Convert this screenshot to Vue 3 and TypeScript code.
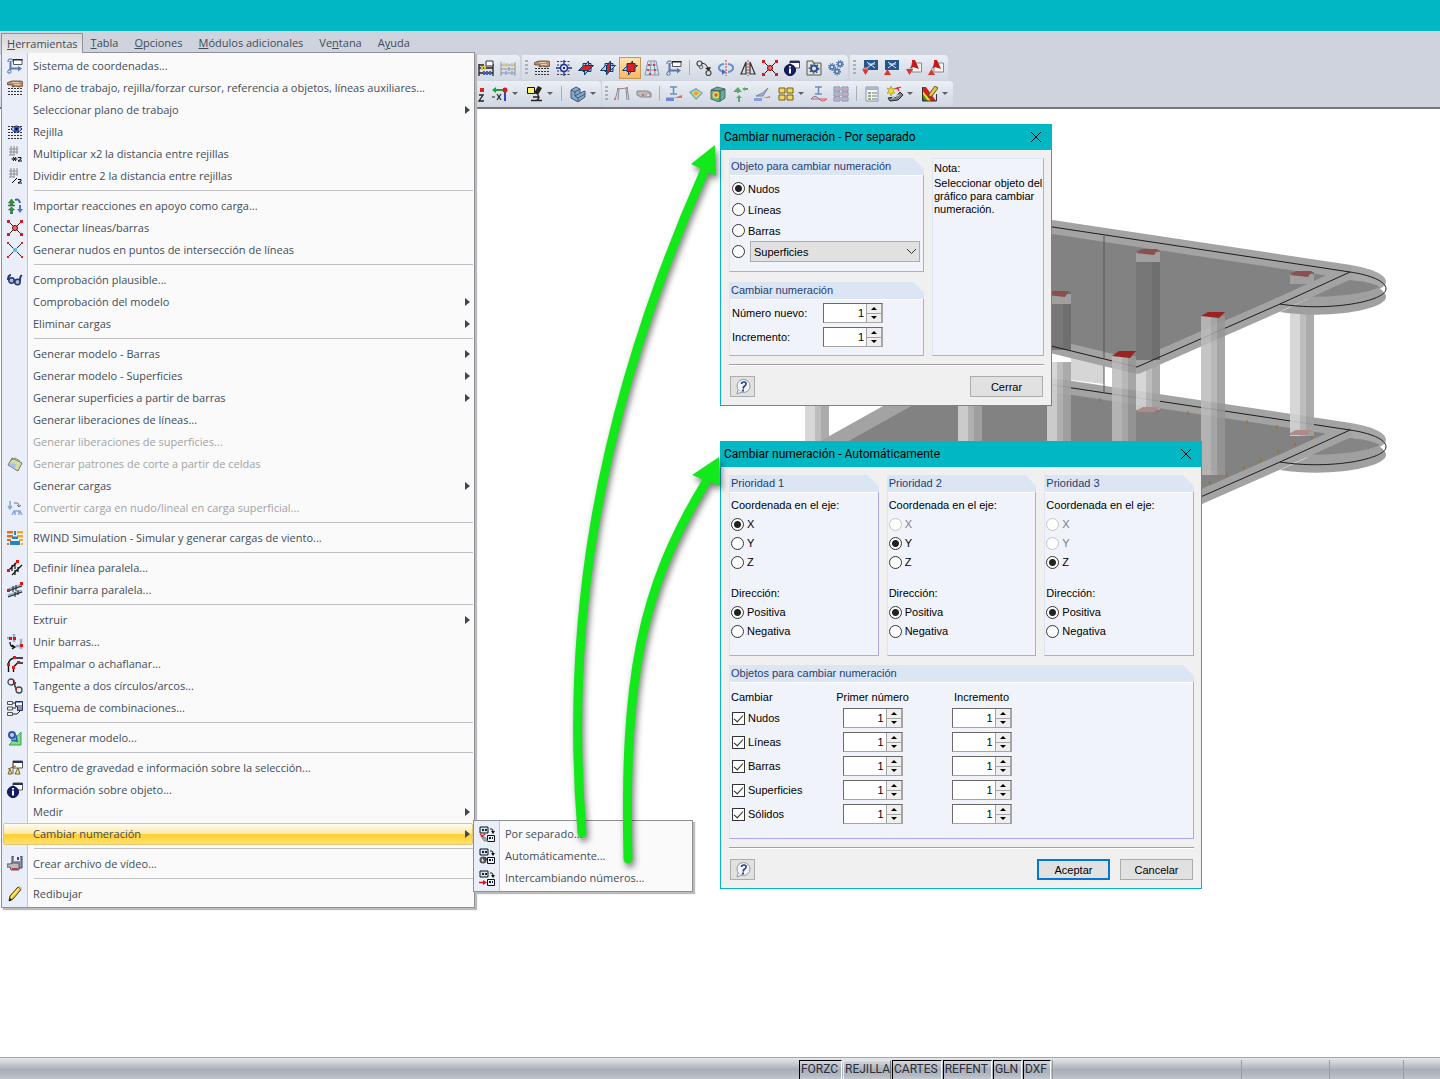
<script setup lang="ts">
import { ref } from 'vue'

interface MenuItem {
  label: string
  icon?: string
  sub?: boolean
  off?: boolean
  line?: boolean
  active?: boolean
}

const dots = '<path d="M1 8.500h14M1 11.500h14M1 14.500h14" stroke="#333" stroke-dasharray="2 1"/>'
const win = '<path d="M6 1h9.500v7H6z" fill="#fff" stroke="#555"/><path d="M6 1h9.500v2H6z" fill="#2b2b66"/>'
const flat = (c: string) => `<path d="M.500 10.500l5-5h10l-5 5z" fill="${c}" stroke="#123a66"/>`
const front = (c: string) => `<path d="M5 3.500h8v8H5z" fill="${c}" stroke="#123a66"/>`
const side = (c: string) => `<path d="M6.500 6l4-5v9l-4 5z" fill="${c}" stroke="#123a66"/>`
const sky = '#a9cdf0'
const red = '#e21f1f'
const renum = '<path d="M1 1h8v6H1z" fill="#cfe6fa" stroke="#111"/><path d="M3 3h2v2H3zM6 3h2v2H6zM10 11h2v2h-2zM13 11h1v2h-1z" fill="#123"/><path d="M8.500 9.500h7v6h-7z" fill="none" stroke="#111"/><path d="M11 3h2q1 0 1 3" fill="none" stroke="#111"/><path d="M12 5h4l-2 3z" fill="#111"/>'

const icons: Record<string, string> = {
  coord: '<path d="M3.500 3v8M3.500 10.500H12M3.500 10.500L1 15" fill="none" stroke="#5a78ab" stroke-width="2"/><path d="M1 4q0-3 2.500-3T6 4" fill="none" stroke="#7f97bf" stroke-width="1.500"/><path d="M11 8l4 2.500-4 3z" fill="#5a78ab"/><circle cx="2.500" cy="13.500" r="1.700" fill="#d5e2f5" stroke="#5a78ab"/><path d="M6.500 1.500h8.500v5H6.500z" fill="#fff" stroke="#555"/><path d="M6 1h9.500v1.500H6z" fill="#222"/>',
  hand: dots + '<path d="M0 3l2-1 3-1 9 0 2 1v4l-4 1-3-1-4 1 1-2-5 0-1-1z" fill="#b98d67" stroke="#4a3120" stroke-width=".7"/><path d="M5 2.500h7M7 4.500h6" stroke="#f1d5b9" stroke-width=".9"/>',
  grid: '<path d="M1 2.500h14M1 5.500h14" stroke="#333" stroke-dasharray="2 1"/>' + dots + '<path d="M4 5q5-6 11 0-5 6-11 0z" fill="#dbe8ff" stroke="#222"/><circle cx="9.500" cy="5" r="2.800" fill="#2558c9"/><circle cx="9.500" cy="5" r="1.200" fill="#001"/>',
  mul: '<path d="M2 3h9M2 6h9M2 9h6M4 0v9M7 0v9M10 0v8" stroke="#8d8d8d"/><path d="M4.500 13h6M6 11l3 4M9 11l-3 4" stroke="#000"/><path d="M11 11.500h3v1.500l-3 2h4" fill="none" stroke="#000"/>',
  div: '<path d="M2 3h9M2 6h9M2 9h6M4 0v9M7 0v9M10 0v8" stroke="#8d8d8d"/><path d="M5 15l5-5" stroke="#000"/><path d="M11 11.500h3v1.500l-3 2h4" fill="none" stroke="#000"/>',
  import: '<path d="M4.500 1l3 4h-2v2h2v1h-6V7h2V5h-2zM4.500 9l3 3h-2v4h-2v-4h-2z" fill="#279c3c" stroke="#145823" stroke-width=".6"/><path d="M8 2q4-2 5 3" fill="none" stroke="#3d65b5" stroke-width="2"/><path d="M12 7h2v4h2l-3 4-3-4h2z" fill="#4c78c8"/>',
  connect: '<path d="M2 2l12 12M14 2L2 14" stroke="#222"/><circle cx="8" cy="8" r="2.500" fill="#f66" stroke="#700"/><path d="M0 0h3v3H0zM13 0h3v3h-3zM0 13h3v3H0zM13 13h3v3h-3z" fill="#d81a1a"/>',
  inter: '<path d="M1 1l14 14M15 1L1 15" stroke="#222"/><path d="M6 6h4v4H6z" fill="#62b9f0"/><path d="M0 0h2v2H0zM14 0h2v2h-2zM0 14h2v2H0zM14 14h2v2h-2z" fill="#f01818"/>',
  glasses: '<path d="M4 3Q1 3 1 8M15 4q-2-1-2 5" fill="none" stroke="#26366f" stroke-width="2"/><circle cx="4.500" cy="8.500" r="2.700" fill="#a8b8e0" stroke="#26366f" stroke-width="1.500"/><circle cx="10.500" cy="10" r="2.700" fill="#a8b8e0" stroke="#26366f" stroke-width="1.500"/>',
  pattern: '<path d="M5 2l10 5-4 8L1 9z" fill="#d5dea0" stroke="#777"/><path d="M3 7l6 1-1 5-6-4z" fill="#a8c0f0"/><path d="M3 5l5-3 5 3" fill="none" stroke="#888"/>',
  convert: '<path d="M3 1v7M1 6l2 3 2-3" fill="none" stroke="#8ba5e0" stroke-width="1.500"/><path d="M7 3h3q2 0 2 3M10 5l2 2 2-2" fill="none" stroke="#777"/><path d="M5 15l2-4h6l2 4M8 11v4M12 11v4" fill="none" stroke="#8ba5e0" stroke-width="1.500"/>',
  rwind: '<path d="M0 1h6v2.500H0zM0 5h6v2.500H0zM0 9h4v2H0zM0 13h2v2H0z" fill="#ef6a10"/><path d="M10 1h6v2.500h-6zM10 5h6v2.500h-6zM12 9h4v2h-4zM14 13h2v2h-2z" fill="#f2ae0d"/><path d="M7 1h2v4H7zM5 6.500h6V9H5zM3 11h10v4H3z" fill="#2384bf"/>',
  parl: '<path d="M1 11L11 1M5 15L15 5M5 5v6M8 3v6M8 10v5M11 7v5" stroke="#111" stroke-width="1.200"/><path d="M0 9h3v3H0zM9 0h3v3H9z" fill="#e31313"/>',
  parb: '<path d="M1 8l14-5M1 14l14-5" stroke="#8fb0cf" stroke-width="3"/><path d="M1 9l14-5M1 15l14-5M6 4v6M9 3v6M8 10v5M11 8v5" stroke="#222"/><path d="M0 7h3v3H0zM13 0h3v3h-3z" fill="#e31313"/>',
  join: '<path d="M0 4h5M7 0v8M14 5v10M9 12h6" stroke="#8fb0cf" stroke-width="2.500"/><path d="M3 8q0 5 4 5M5 11l3 2-3 2" fill="none" stroke="#111" stroke-width="1.300"/><path d="M2 3h3v3H2zM6 3h3v3H6zM13 10h3v3h-3z" fill="#e31313"/>',
  fillet: '<path d="M1.500 16V9q0-7 7-7H16M6.500 16v-5l4-4H16" fill="none" stroke="#111" stroke-width="1.400"/><path d="M0 7h3v3H0zM6 0h3v3H6zM5 10h3v3H5zM10 5h3v3h-3z" fill="#d81a1a"/>',
  tangent: '<circle cx="4" cy="4" r="3" fill="none" stroke="#444" stroke-width="1.300"/><circle cx="12" cy="12" r="3" fill="none" stroke="#444" stroke-width="1.300"/><path d="M6.500 2.500l2.500 9" stroke="#222" stroke-width="1.300"/><path d="M7 4h2v2H7zM8 9h2v2H8z" fill="#d81a1a"/>',
  copy: '<circle cx="3.500" cy="3.500" r="2.500" fill="none" stroke="#444" stroke-width="1.200"/><circle cx="12.500" cy="13" r="2.500" fill="none" stroke="#444" stroke-width="1.200"/><circle cx="5" cy="7" r="1.800" fill="none" stroke="#666"/><path d="M6 3q4 0 6 5" fill="none" stroke="#222"/><path d="M9 8l6-1-2 4z" fill="#222"/>',
  scheme: '<path d="M.500 1.500h5v3h-5zM.500 7h5v3h-5zM.500 12.500h5v3h-5z" fill="#eee" stroke="#555"/><path d="M6 3h3M6 8h3M6 14h4l3-3" stroke="#222" fill="none"/><path d="M8.500 1.500h7v9h-5v-4h-2z" fill="#7d94d8" stroke="#333"/><path d="M9 3h6v2H9z" fill="#fff"/>',
  regen: '<path d="M14 2v13H2z" fill="#7edc86" stroke="#3fa34a"/><circle cx="5" cy="5" r="3" fill="#c3d4f2" stroke="#2d57ad" stroke-width="2"/><path d="M9 5l1 6-6-1" fill="none" stroke="#2d57ad" stroke-width="1.500"/>',
  balance: win + '<path d="M6 4v10M1 9l8-3M1 14h4l-2-5zM8 14h5l-2-6z" fill="#eedc9a" stroke="#7b6528"/>',
  info: win + '<circle cx="6" cy="10" r="5.500" fill="#141d6b" stroke="#080d3a"/><path d="M5 6h2v1.500H5zM5 8.500h2v5H5z" fill="#fff"/>',
  video: '<path d="M5 0h10v12H5z" fill="#8892c8" stroke="#444"/><path d="M7 0h6v5H7z" fill="#eef"/><path d="M10 1h2v3h-2z" fill="#446"/><path d="M0 8h3l2-1h7v7H4l-1-3H0z" fill="#bbb" stroke="#555"/><path d="M5 12h6v2H5z" fill="#c34"/>',
  pencil: '<path d="M3 10L11 1l3 2.500L6 13l-4 2z" fill="#f6d32d" stroke="#333"/><path d="M4.500 11l7-8.500" stroke="#fff3a0"/><path d="M11 1l1.500-1 2.500 2-1 1.500z" fill="#e9a0a0"/><path d="M2 15l1-3 2 2z" fill="#111"/>',
  sep1: renum + '<path d="M1 8l5 5M6 8l-4 3" stroke="#c22" stroke-width="1.300"/><path d="M3 12l3-1 3 4H5z" fill="#aaa" stroke="#666" stroke-width=".6"/>',
  auto: renum + '<circle cx="4" cy="12" r="2.500" fill="none" stroke="#555" stroke-width="2"/><circle cx="6" cy="11" r="1.500" fill="none" stroke="#333"/>',
  swap: renum + '<path d="M0 12.500h5" stroke="#d11" stroke-width="1.500"/><path d="M4 10l4 2.500L4 15z" fill="#d11"/>',
  abacus: '<path d="M1 16V4M15 16V4M1 8h14M1 13h14M1 5h5" stroke="#222" stroke-width="1.300"/><path d="M3 6h2v4H3zM6 6h2v4H6z" fill="#e4be2d"/><path d="M5 11h2v4H5zM8 11h2v4H8zM11 11h2v4h-2z" fill="#3f62b5"/><path d="M8 1h7v5H8z" fill="#fff" stroke="#333"/>',
  abacus2: '<g opacity=".5"><path d="M1 16V2M15 16V2M1 5h14M1 9h14M1 13h14" stroke="#444"/><path d="M3 3h2v4H3zM6 3h2v4H6zM11 3h2v4h-2z" fill="#d4b43d"/><path d="M5 11h2v4H5zM8 7h2v4H8zM11 11h2v4h-2z" fill="#5e7dc5"/></g>',
  snap: '<path d="M1 1.500h14M1 5h14M1 11h14M1 14.500h14" stroke="#333" stroke-dasharray="2 1.500"/><path d="M8 0v16M0 8h16" stroke="#1d2f9a" stroke-width="1.300"/><circle cx="8" cy="8" r="3.500" fill="#dce4f5" stroke="#1d2f9a" stroke-width="1.500"/><path d="M7 7h2v2H7z" fill="#1d2f9a"/>',
  plane1: front(sky) + side(sky) + flat(red),
  plane2: front(sky) + flat(sky) + side(red),
  plane3: flat(sky) + side(sky) + front(red),
  mesh: '<path d="M4 1h8l3 14H1zM3 5h10M2 10h12M7 1L6 15M10 1l1 14" fill="none" stroke="#7f98b5"/><path d="M4 4h2v2H4zM9 4h2v2H9zM3 9h2v2H3zM10 9h2v2h-2zM5 13h2v2H5z" fill="#d84040"/>',
  rotate: '<path d="M8 0v16" stroke="#c33" stroke-dasharray="2 1"/><path d="M6 4Q0 5 1 9q2 3 6 3M10 4q6 1 5 5-2 3-5 3" fill="none" stroke="#6a8fcb" stroke-width="2"/><path d="M4 9l4 3-4 3z" fill="#4a70b0"/>',
  mirror: '<path d="M6 2v12H1zM10 2v12h5z" fill="none" stroke="#333" stroke-width="1.200"/><path d="M8 0v16" stroke="#c33" stroke-dasharray="2 1"/>',
  gear: '<path d="M1 1h6v2h8v12H1z" fill="#eee4d2" stroke="#555"/><circle cx="8" cy="8.500" r="3" fill="none" stroke="#23509a" stroke-width="2"/><circle cx="8" cy="8.500" r="4.700" fill="none" stroke="#23509a" stroke-width="1.300" stroke-dasharray="1.500 2"/>',
  gears: '<g fill="none" stroke="#426cb0" stroke-width="1.500"><circle cx="4" cy="7" r="2"/><circle cx="9" cy="11.500" r="2"/><circle cx="12" cy="4" r="2"/></g><g fill="none" stroke="#426cb0" stroke-width="1.300" stroke-dasharray="1 1.200"><circle cx="4" cy="7" r="3.300"/><circle cx="9" cy="11.500" r="3.300"/><circle cx="12" cy="4" r="3.300"/></g>',
  sc1: '<path d="M2 0h14v10H2z" fill="#24578e"/><path d="M5 2l8 6M13 2L5 8M6 4h7" stroke="#dbe9f7"/><path d="M0 9h7l-3.500 6z" fill="#dd3333"/><path d="M1 7.500h5v2H1z" fill="#f08080"/>',
  sc2: '<path d="M1 0h14v10H1z" fill="#24578e"/><path d="M4 2l8 6M12 2L4 8M5 4h7" stroke="#dbe9f7"/><path d="M0 15h7L3.500 9z" fill="#dd3333"/>',
  pdf1: '<path d="M6 3h9.500v9H6z" fill="#f3f3f3" stroke="#888"/><path d="M6 0h3l4 9-6-2-4 2q4-3 3-9z" fill="#c81717"/><path d="M0 9h7l-3.500 6z" fill="#dd3333"/>',
  pdf2: '<path d="M6 3h9.500v9H6z" fill="#f3f3f3" stroke="#888"/><path d="M6 0h3l4 9-6-2-4 2q4-3 3-9z" fill="#c81717"/><path d="M0 15h7L3.500 9z" fill="#dd3333"/>',
  zax: '<path d="M12 2h4v4h-4z" fill="#d22"/><path d="M11 9h4l-4 6h5" fill="none" stroke="#222" stroke-width="1.300"/>',
  xax: '<path d="M0 4l4-3v2h7v2H4v2z" fill="#1ba332"/><path d="M13 4v11" stroke="#2947b8" stroke-width="2"/><circle cx="13" cy="4" r="2.500" fill="#d31c1c"/><path d="M0 11h3M5 8l4 6M9 8l-4 6" stroke="#222" stroke-width="1.200"/>',
  micro: '<path d="M.500 1.500h7v6h-7z" fill="#fdf56a" stroke="#111"/><path d="M11 0l4 2-4 7-4-2z" fill="#222"/><path d="M11 9q2 3-1 5M4 14.500h11M6 11h6" fill="none" stroke="#222" stroke-width="1.500"/>',
  solid: '<path d="M1 4l5-3 4 2v4l5-2v6l-7 5-7-4z" fill="#87a8c9" stroke="#3e5b7c"/><path d="M1 4l4 2v4l3 2M5 6l5-3M8 12l7-4M8 12v4M5 10l5-3" fill="none" stroke="#3e5b7c"/>',
  frame: '<path d="M1 14L4 3l9-1 2 12M5 3l-1 11M12 3l1 11" fill="none" stroke="#889"/><path d="M3 2h2v2H3zM12 1h2v2h-2zM0 12h2v2H0z" fill="#d77"/>',
  tube: '<path d="M1 5h11l3 2v4H5l-4-2z" fill="#bbb" stroke="#888"/><circle cx="12" cy="9" r="2" fill="#ddd" stroke="#999"/><path d="M6 8h2v2H6z" fill="#d66"/>',
  beam: '<path d="M4 1h7M7.500 1v7M4 8h7" stroke="#6c8fb9" stroke-width="1.500"/><path d="M0 11.500h8V15H0z" fill="#6d88d8"/><path d="M8 12l8-3v3z" fill="#e06c6c"/>',
  surf: '<path d="M1 6l7-4 7 5-7 7z" fill="#7c8fe0"/><path d="M2 6l6-3 6 4-6 6z" fill="#55c8c8"/><path d="M3.500 6.500L8 4l5 3-5 5z" fill="#f0e04a"/><path d="M5 7l3-2 3 2-3 3z" fill="#ee9a4a"/>',
  cube: '<path d="M1 4l6-3 8 2v9l-6 4-8-3z" fill="#5fae95" stroke="#556b7c"/><circle cx="6" cy="9" r="3.500" fill="#e6d83e"/><circle cx="6" cy="9" r="1.700" fill="#e05252"/><path d="M10 5v10M1 4l9 1 5-2" fill="none" stroke="#456"/>',
  react: '<path d="M6 1l4 5H7v1H5V6H1zM10 3l3-2v1h3v2h-3v1zM7 9l3 3H8v4H6v-4H4z" fill="#5ca96e"/>',
  slope: '<path d="M2 10Q9 8 14 2l-5 8z" fill="#a9b8cf" stroke="#74869f"/><path d="M0 12h8v3H0z" fill="#8aa0da"/><path d="M8 12l8-2v2z" fill="#e08080"/>',
  blocks: '<path d="M1 2h6v5H1zM9 2h6v5H9zM1 9h6v5H1zM9 9h6v5H9z" fill="#f3d75c" stroke="#6e5e18"/>',
  wave: '<path d="M4 1h7M7.500 1v7M4 8h7" stroke="#6c8fb9" stroke-width="1.500"/><path d="M0 13q4-5 8 0" fill="none" stroke="#6078cc"/><path d="M8 13q4 4 8 0M0 13h16" fill="none" stroke="#d55"/>',
  tables: '<path d="M1 1h6v4H1zM9 1h6v4H9zM1 6h6v4H1zM9 6h6v4H9zM1 11h6v4H1zM9 11h6v4H9z" fill="#cfd8ea" stroke="#7f8cab"/><path d="M2 3h4M10 3h4M2 8h4M10 8h4M2 13h4M10 13h4" stroke="#c77"/>',
  list: '<path d="M3 1h12v14H3z" fill="#f1f3f7" stroke="#8a94a6"/><path d="M3 1h12v3H3z" fill="#a9b5c9"/><path d="M5 6h3v2H5zM5 9h3v2H5zM5 12h3v2H5z" fill="#8fb07a"/><path d="M9 7h5M9 10h5M9 13h5" stroke="#777"/>',
  wand: '<path d="M4 0l1 3 3-1-2 3 2 2-3 0-1 3-1-3-3 0 2-2-2-3 3 1z" fill="#f3d92c" stroke="#8a7a10" stroke-width=".5"/><path d="M8 3l6-2M10 1l2 4" stroke="#d22" stroke-width="1.300"/><path d="M1 12l8-1 4-5 3 3-5 5-8 1z" fill="#7d8a94" stroke="#222"/><path d="M5 12l7-3" stroke="#dfe6ec"/>',
  colors: '<path d="M0 1h4l10 14H0z" fill="#d81d1d"/><path d="M0 4l9 11H0z" fill="#f2e01c"/><path d="M0 7l6 8H0z" fill="#2e9a34"/><path d="M0 11l3 4H0z" fill="#2340c0"/><path d="M.500 1v14h14V8" fill="none" stroke="#333"/><path d="M7 8l6-8 3 2-6 8-3 1z" fill="#f0c03a" stroke="#553"/>',
  help: '<circle cx="8.500" cy="7" r="6.500" fill="#f4f6fa" stroke="#8f98a5"/><path d="M3 11l-1 4 5-2" fill="#f4f6fa" stroke="#8f98a5"/><path d="M6.500 5q0-2 2.500-2t2 2Q11 6.500 9 7.500L8 9.500" fill="none" stroke="#28428c" stroke-width="1.700"/><path d="M7 10.500h2v2H7z" fill="#28428c"/>',
}

const tabs: [string, string, string][] = [
  ['', 'H', 'erramientas'],
  ['', 'T', 'abla'],
  ['', 'O', 'pciones'],
  ['', 'M', 'ódulos adicionales'],
  ['Ve', 'n', 'tana'],
  ['A', 'y', 'uda'],
]

const menu: MenuItem[] = [
  { label: 'Sistema de coordenadas...', icon: 'coord' },
  { label: 'Plano de trabajo, rejilla/forzar cursor, referencia a objetos, líneas auxiliares...', icon: 'hand' },
  { label: 'Seleccionar plano de trabajo', sub: true },
  { label: 'Rejilla', icon: 'grid' },
  { label: 'Multiplicar x2 la distancia entre rejillas', icon: 'mul' },
  { label: 'Dividir entre 2 la distancia entre rejillas', icon: 'div' },
  { label: 'Importar reacciones en apoyo como carga...', icon: 'import', line: true },
  { label: 'Conectar líneas/barras', icon: 'connect' },
  { label: 'Generar nudos en puntos de intersección de líneas', icon: 'inter' },
  { label: 'Comprobación plausible...', icon: 'glasses', line: true },
  { label: 'Comprobación del modelo', sub: true },
  { label: 'Eliminar cargas', sub: true },
  { label: 'Generar modelo - Barras', sub: true, line: true },
  { label: 'Generar modelo - Superficies', sub: true },
  { label: 'Generar superficies a partir de barras', sub: true },
  { label: 'Generar liberaciones de líneas...' },
  { label: 'Generar liberaciones de superficies...', off: true },
  { label: 'Generar patrones de corte a partir de celdas', icon: 'pattern', off: true },
  { label: 'Generar cargas', sub: true },
  { label: 'Convertir carga en nudo/lineal en carga superficial...', icon: 'convert', off: true },
  { label: 'RWIND Simulation - Simular y generar cargas de viento...', icon: 'rwind', line: true },
  { label: 'Definir línea paralela...', icon: 'parl', line: true },
  { label: 'Definir barra paralela...', icon: 'parb' },
  { label: 'Extruir', sub: true, line: true },
  { label: 'Unir barras...', icon: 'join' },
  { label: 'Empalmar o achaflanar...', icon: 'fillet' },
  { label: 'Tangente a dos círculos/arcos...', icon: 'tangent' },
  { label: 'Esquema de combinaciones...', icon: 'scheme' },
  { label: 'Regenerar modelo...', icon: 'regen', line: true },
  { label: 'Centro de gravedad e información sobre la selección...', icon: 'balance', line: true },
  { label: 'Información sobre objeto...', icon: 'info' },
  { label: 'Medir', sub: true },
  { label: 'Cambiar numeración', sub: true, active: true },
  { label: 'Crear archivo de vídeo...', icon: 'video', line: true },
  { label: 'Redibujar', icon: 'pencil', line: true },
]

const submenu: MenuItem[] = [
  { label: 'Por separado...', icon: 'sep1' },
  { label: 'Automáticamente...', icon: 'auto' },
  { label: 'Intercambiando números...', icon: 'swap' },
]

// '|' is a divider; a trailing '+' marks a button with a drop-down arrow
const toolbars: string[][][] = [
  [
    ['abacus', 'abacus2'],
    ['hand', 'snap', 'plane1', 'plane2', 'plane3', 'mesh', 'coord', '|', 'copy', 'rotate', 'mirror', 'connect', 'info', 'gear', 'gears'],
    ['sc1', 'sc2', 'pdf1', 'pdf2'],
  ],
  [
    ['zax', 'xax+', 'micro+', '|', 'solid+'],
    ['frame', 'tube', '|', 'beam', 'surf', 'cube', 'react', 'slope', 'blocks+', 'wave', 'tables', '|', 'list', 'wand+', 'colors+'],
  ],
]

const objectKind = ref('Nudos')
const surfaceKind = ref('Superficies')
const fields = ref([
  { label: 'Número nuevo:', value: 1 },
  { label: 'Incremento:', value: 1 },
])
const priorities = ref([
  { axis: 'X', dir: 'Positiva', off: '' },
  { axis: 'Y', dir: 'Positiva', off: 'X' },
  { axis: 'Z', dir: 'Positiva', off: 'XY' },
])
const rows = ref(['Nudos', 'Líneas', 'Barras', 'Superficies', 'Sólidos'].map((name) => ({ name, on: true, first: 1, step: 1 })))
const toggles = ['FORZC', 'REJILLA', 'CARTES', 'REFENT', 'GLN', 'DXF']

const slab = 'M960 213L1350 272L1280 304L1137 367L822 290Z'
const cap = 'M1350 272C1370 275 1386 281 1386 289C1386 301 1330 312 1280 304Z'
const capInner = 'M1350 280Q1372 282 1380 287Q1360 297 1300 297Z'
const edge = 'M960 213L1350 272L1280 304L1137 367L822 290M1350 272C1370 275 1386 281 1386 289C1386 301 1330 312 1280 304'
const columns = [
  [805, 400, 450], [958, 400, 445], [1047, 362, 445], [1136, 360, 410], [1290, 300, 436],
]
const frontColumns = [[1112, 356, 445], [1201, 316, 475]]
const heads = [[1136, 250, 360], [1047, 292, 350], [1290, 272, 284]]
const supports = [[1100, 400], [1158, 410], [1188, 413], [1247, 422], [1277, 427], [1312, 437], [1295, 444], [1278, 452], [1261, 460], [1244, 468], [1227, 475], [1210, 483]]
</script>

<template>
  <div class="app">
    <header class="titlebar"></header>

    <nav class="menubar">
      <button v-for="(t, i) in tabs" :key="i" class="tab" :class="{ open: i === 0 }">{{ t[0] }}<u>{{ t[1] }}</u>{{ t[2] }}</button>

      <ul class="menu">
        <li v-for="m in menu" :key="m.label" :class="{ line: m.line }">
          <button class="entry" :class="{ active: m.active }" :disabled="m.off">
            <span class="slot"><svg v-if="m.icon" class="ico" viewBox="0 0 16 16" v-html="icons[m.icon]" /></span>
            <span class="label">{{ m.label }}</span>
            <span v-if="m.sub" class="more"></span>
          </button>
          <ul v-if="m.active" class="menu submenu">
            <li v-for="s in submenu" :key="s.label">
              <button class="entry">
                <span class="slot"><svg class="ico" viewBox="0 0 16 16" v-html="icons[s.icon!]" /></span>
                <span class="label">{{ s.label }}</span>
              </button>
            </li>
          </ul>
        </li>
      </ul>
    </nav>

    <div class="toolbars">
      <div v-for="(bar, b) in toolbars" :key="b" class="bar" :class="'bar' + b">
        <div v-for="(group, g) in bar" :key="g" class="group">
          <span v-if="g > 0" class="grip"></span>
          <template v-for="(name, n) in group" :key="n">
            <span v-if="name === '|'" class="divider"></span>
            <button v-else class="tool" :class="{ split: name.endsWith('+'), on: name === 'plane3' }" :aria-label="name">
              <svg class="ico" viewBox="0 0 16 16" v-html="icons[name.replace('+', '')]" />
              <span v-if="name.endsWith('+')" class="drop"></span>
            </button>
          </template>
        </div>
      </div>
    </div>

    <main class="canvas">
      <svg class="model" viewBox="800 208 600 312" width="600" height="312">
        <g transform="translate(0 158)">
          <path :d="cap" fill="#a8a8a8" transform="translate(0 -7)" />
          <path :d="cap" fill="#a0a0a0" transform="translate(0 8)" />
          <path :d="capInner" fill="#858585" />
          <path :d="slab" fill="#828282" stroke="#a3a3a3" stroke-width="14" stroke-linejoin="bevel" />
          <path :d="edge" fill="none" stroke="#1c1c1c" />
        </g>
        <path d="M1071 357h33v27l-33-4z" fill="#d6d6d6" />
        <path d="M1104 366v27" stroke="#555" />
        <path v-for="(s, i) in supports" :key="'s' + i" :d="`M${s[0]} ${s[1] - 2}v4`" stroke="#a0642e" />
        <g v-for="(c, i) in columns" :key="'c' + i" opacity=".9">
          <rect :x="c[0]" :y="c[1]" width="10" :height="c[2] - c[1]" fill="#d3d3d3" />
          <rect :x="c[0] + 10" :y="c[1]" width="6" :height="c[2] - c[1]" fill="#b6b6b6" />
          <rect :x="c[0] + 16" :y="c[1]" width="8" :height="c[2] - c[1]" fill="#a3a3a3" />
        </g>
        <path d="M1137 410l6-3h16l-5 5h-17zM1290 433l6-3h16l-5 5h-17zM1201 474l6-3h16l-5 4h-17z" fill="#b08a8a" />
        <path :d="cap" fill="#a8a8a8" transform="translate(0 -7)" />
        <path :d="cap" fill="#a0a0a0" transform="translate(0 8)" />
        <path :d="capInner" fill="#858585" />
        <path :d="slab" fill="#828282" stroke="#a3a3a3" stroke-width="14" stroke-linejoin="bevel" />
        <g v-for="(h, i) in heads" :key="'h' + i">
          <rect :x="h[0]" :y="h[1]" width="16" :height="h[2] - h[1]" fill="#777" />
          <rect :x="h[0] + 16" :y="h[1]" width="8" :height="h[2] - h[1]" fill="#6f6f6f" />
          <rect :x="h[0]" :y="h[1] + 2" width="24" height="10" fill="#a0a0a0" />
          <path :d="`M${h[0]} ${h[1] + 3}l6-4h16l-4 6z`" fill="#8b4f4f" />
        </g>
        <path d="M1104 236v122" stroke="#555" />
        <path :d="edge" fill="none" stroke="#1c1c1c" />
        <g v-for="(c, i) in frontColumns" :key="'f' + i" opacity=".85">
          <rect :x="c[0]" :y="c[1]" width="10" :height="c[2] - c[1]" fill="#bcbcbc" />
          <rect :x="c[0] + 10" :y="c[1]" width="6" :height="c[2] - c[1]" fill="#acacac" />
          <rect :x="c[0] + 16" :y="c[1]" width="8" :height="c[2] - c[1]" fill="#979797" />
        </g>
        <path d="M1112 356l7-5h17l-6 7zM1201 316l7-4h17l-6 6z" fill="#992222" />
      </svg>

      <section class="dialog first" aria-label="Cambiar numeración - Por separado">
        <div class="caption">
          <h2>Cambiar numeración - Por separado</h2>
          <button class="close" aria-label="Cerrar ventana"><svg viewBox="0 0 10 10" width="10" height="10"><path d="M0 0L10 10M10 0L0 10" stroke="#000" /></svg></button>
        </div>
        <div class="body">
          <div class="columns">
            <div class="stack">
              <div class="box objects">
                <h3>Objeto para cambiar numeración</h3>
                <div class="inner">
                  <label v-for="k in ['Nudos', 'Líneas', 'Barras']" :key="k" class="choice"><input v-model="objectKind" type="radio" name="kind" :value="k" />{{ k }}</label>
                  <div class="choice">
                    <input v-model="objectKind" type="radio" name="kind" value="Superficies" aria-label="Otro objeto" />
                    <span class="combo">
                      <select v-model="surfaceKind" aria-label="Objeto"><option>Superficies</option><option>Sólidos</option></select>
                      <svg viewBox="0 0 9 5" width="9" height="5"><path d="M0 0l4.500 4.500L9 0" fill="none" stroke="#333" /></svg>
                    </span>
                  </div>
                </div>
              </div>
              <div class="box numbers">
                <h3>Cambiar numeración</h3>
                <div class="inner">
                  <div v-for="(f, i) in fields" :key="i" class="field">
                    <label :for="'f' + i">{{ f.label }}</label>
                    <span class="spin"><input :id="'f' + i" v-model="f.value" type="text" /><span class="steps"><button aria-label="Más" @click="f.value++"><i class="up"></i></button><button aria-label="Menos" @click="f.value--"><i class="down"></i></button></span></span>
                  </div>
                </div>
              </div>
            </div>
            <div class="note"><p>Nota:</p><p>Seleccionar objeto del gráfico para cambiar numeración.</p></div>
          </div>
          <footer>
            <button class="push help" aria-label="Ayuda"><svg class="ico" viewBox="0 0 16 16" v-html="icons.help" /></button>
            <button class="push">Cerrar</button>
          </footer>
        </div>
      </section>

      <section class="dialog second" aria-label="Cambiar numeración - Automáticamente">
        <div class="caption">
          <h2>Cambiar numeración - Automáticamente</h2>
          <button class="close" aria-label="Cerrar ventana"><svg viewBox="0 0 10 10" width="10" height="10"><path d="M0 0L10 10M10 0L0 10" stroke="#000" /></svg></button>
        </div>
        <div class="body">
          <div class="columns">
            <div v-for="(p, i) in priorities" :key="i" class="box priority">
              <h3>Prioridad {{ i + 1 }}</h3>
              <div class="inner">
                <p>Coordenada en el eje:</p>
                <label v-for="a in ['X', 'Y', 'Z']" :key="a" class="choice" :class="{ off: p.off.includes(a) }"><input v-model="p.axis" type="radio" :name="'axis' + i" :value="a" :disabled="p.off.includes(a)" />{{ a }}</label>
                <p class="gap">Dirección:</p>
                <label v-for="d in ['Positiva', 'Negativa']" :key="d" class="choice"><input v-model="p.dir" type="radio" :name="'dir' + i" :value="d" />{{ d }}</label>
              </div>
            </div>
          </div>
          <div class="box list">
            <h3>Objetos para cambiar numeración</h3>
            <div class="inner">
              <table>
                <thead><tr><th>Cambiar</th><th>Primer número</th><th>Incremento</th></tr></thead>
                <tbody>
                  <tr v-for="r in rows" :key="r.name">
                    <td><label class="choice"><input v-model="r.on" type="checkbox" />{{ r.name }}</label></td>
                    <td><span class="spin"><input v-model="r.first" type="text" :aria-label="r.name + ': primer número'" /><span class="steps"><button aria-label="Más" @click="r.first++"><i class="up"></i></button><button aria-label="Menos" @click="r.first--"><i class="down"></i></button></span></span></td>
                    <td><span class="spin"><input v-model="r.step" type="text" :aria-label="r.name + ': incremento'" /><span class="steps"><button aria-label="Más" @click="r.step++"><i class="up"></i></button><button aria-label="Menos" @click="r.step--"><i class="down"></i></button></span></span></td>
                  </tr>
                </tbody>
              </table>
            </div>
          </div>
          <footer>
            <button class="push help" aria-label="Ayuda"><svg class="ico" viewBox="0 0 16 16" v-html="icons.help" /></button>
            <button class="push default">Aceptar</button>
            <button class="push">Cancelar</button>
          </footer>
        </div>
      </section>
    </main>

    <svg class="arrows" viewBox="560 130 180 750" width="180" height="750">
      <g fill="none" stroke="#12e81a" stroke-width="9" stroke-linecap="round">
        <path d="M582 833C566 640 590 430 704 172" />
        <path d="M628 859C624 680 640 590 706 482" />
      </g>
      <path d="M715 145l1 31-25-12zM719 457l1 29-28-11z" fill="#12e81a" />
    </svg>

    <footer class="status">
      <span v-for="t in toggles" :key="t" class="toggle" :class="{ raised: t === 'REJILLA' }">{{ t }}</span>
      <span class="pane wide"></span><span class="pane mid"></span><span class="pane small"></span><span class="pane end"></span>
    </footer>
  </div>
</template>

<style>
body {
  margin: 0;
}
</style>

<style scoped>
* {
  box-sizing: border-box;
}
.app {
  position: relative;
  display: flex;
  flex-direction: column;
  min-height: 100vh;
  overflow: hidden;
  background: #fff;
  font-family: 'Liberation Sans', Arial, sans-serif;
  font-size: 11px;
  color: #000;
}
button {
  margin: 0;
  padding: 0;
  border: 0;
  background: none;
  font: inherit;
  color: inherit;
}
ul,
h2,
h3,
p {
  margin: 0;
  padding: 0;
  list-style: none;
  font-size: inherit;
  font-weight: normal;
}
.ico {
  display: block;
  width: 16px;
  height: 16px;
}
.titlebar {
  height: 31px;
  background: #00b7c3;
}
.menubar {
  position: relative;
  z-index: 3;
  display: flex;
  height: 22px;
  padding: 2px 0 0 1px;
  background: #ced3dd;
  font-family: 'Open Sans', 'Noto Sans', sans-serif;
  color: #434c58;
}
.tab {
  height: 20px;
  padding: 0 8px;
  line-height: 20px;
}
.tab.open {
  position: relative;
  z-index: 2;
  padding: 0 4px 0 5px;
  border: 1px solid #8f949b;
  border-bottom: 0;
  background: linear-gradient(#d6d6d6, #ececec);
  line-height: 18px;
}
.menu {
  position: absolute;
  top: 21px;
  left: 1px;
  width: 474px;
  padding: 2px 1px;
  border: 1px solid #8d9097;
  background: linear-gradient(90deg, #e9eef8 25px, #c5c5c8 25px, #c5c5c8 26px, #fafafa 26px);
  box-shadow: 2px 2px 1px #bbb;
}
.menu li {
  position: relative;
}
.menu li.line {
  padding-top: 8px;
}
.menu li.line::before {
  content: '';
  position: absolute;
  top: 3px;
  right: 0;
  left: 31px;
  height: 1px;
  background: #c0c0c2;
}
.entry {
  display: flex;
  align-items: center;
  width: 100%;
  height: 22px;
  text-align: left;
}
.entry:disabled {
  color: #a2a2a4;
}
.entry.active {
  border: 1px solid #dcc77c;
  border-radius: 2px;
  background: linear-gradient(#fffdf0, #fbe7a6 48%, #ffcf33 50%, #ffe06a);
}
.slot {
  width: 30px;
  padding-left: 4px;
}
.entry.active .slot {
  width: 29px;
}
.label {
  flex: 1;
  padding-bottom: 2px;
  white-space: nowrap;
}
.more {
  margin-right: 3px;
  border: 4px solid transparent;
  border-right: 0;
  border-left: 5px solid #3f4650;
}
.active .more {
  margin-right: 2px;
}
.submenu {
  top: -3px;
  left: 470px;
  width: 220px;
  z-index: 4;
}
.toolbars {
  position: relative;
  display: flex;
  flex-direction: column;
  gap: 1px;
  padding: 2px 0 1px;
  border-bottom: 2px solid #74777d;
  background: #ced3dd;
}
.bar {
  display: flex;
}
.bar0 {
  gap: 2px;
}
.bar1 {
  gap: 1px;
}
.bar0 .group:first-child {
  padding-left: 475px;
}
.bar1 .group:first-child {
  padding-left: 465px;
}
.group {
  display: flex;
  align-items: center;
  height: 25px;
  padding-right: 1px;
  border-radius: 0 4px 4px 0;
  background: linear-gradient(#eceff5, #dde2eb 50%, #d3d9e4);
}
.grip {
  width: 3px;
  height: 15px;
  margin: 0 3px;
  background: repeating-linear-gradient(#a9aeb9 0 2px, transparent 2px 4px);
}
.tool {
  display: flex;
  align-items: center;
  justify-content: center;
  width: 22px;
  height: 22px;
}
.tool.on {
  border: 1px solid #c2985a;
  background: linear-gradient(#fde3b1, #fdb85c);
}
.tool.split {
  width: 35px;
  gap: 4px;
}
.drop {
  border: 3px solid transparent;
  border-top-color: #5c6068;
  border-bottom: 0;
}
.divider {
  width: 1px;
  height: 15px;
  margin: 0 3px 0 4px;
  background: #a9aeb9;
}
.canvas {
  flex: 1;
}
.model {
  position: absolute;
  top: 208px;
  left: calc(50% + 80px);
}
.dialog {
  position: absolute;
  left: 50%;
  border: 1px solid #00b7c3;
  background: #f0f0f0;
}
.first {
  top: 124px;
  width: 332px;
}
.second {
  top: 441px;
  width: 482px;
}
.caption {
  display: flex;
  align-items: center;
  justify-content: space-between;
  height: 25px;
  padding: 0 10px 2px 3px;
  background: #00b7c3;
}
.caption h2 {
  font: 12px Roboto, 'Open Sans', sans-serif;
}
.close svg {
  display: block;
}
.body {
  padding: 8px 7px 8px 8px;
}
.columns {
  display: flex;
  gap: 8px;
}
.stack {
  display: flex;
  flex-direction: column;
  gap: 10px;
  width: 195px;
}
.box {
  position: relative;
}
.box h3 {
  height: 17px;
  padding-left: 2px;
  background: #dce5f4;
  clip-path: polygon(0 0, calc(100% - 11px) 0, 100% 11px, 100% 100%, 0 100%);
  line-height: 16px;
  color: #1f3f70;
}
.inner {
  padding: 3px 3px 9px 2px;
  border: solid #a9a9ec;
  border-width: 0 1px 1px 0;
  border-left: 1px solid #dce5f4;
  background: #f0f3fa;
  box-shadow: inset 0 1px #fff;
}
.numbers .inner {
  padding: 2px 3px 6px 2px;
}
.choice {
  display: flex;
  align-items: center;
  gap: 3px;
  height: 21px;
}
.choice.off {
  color: #7d7d7d;
}
input[type='radio'],
input[type='checkbox'] {
  flex: none;
  width: 13px;
  height: 13px;
  margin: 0;
  border: 1px solid #333;
  background: #fff;
  appearance: none;
}
input[type='radio'] {
  border-radius: 50%;
}
input[type='radio']:checked {
  background: radial-gradient(circle, #222 3px, #fff 4px);
}
input:disabled {
  border-color: #c4c4c4;
}
input[type='checkbox']:checked::after {
  content: '';
  display: block;
  width: 4px;
  height: 8px;
  margin-left: 3px;
  border: solid #222;
  border-width: 0 1px 1px 0;
  transform: rotate(42deg);
}
.combo {
  position: relative;
  flex: 1;
  margin-left: 2px;
}
.combo select {
  display: block;
  width: 100%;
  height: 21px;
  padding: 0 3px;
  border: 1px solid #adadad;
  border-radius: 0;
  background: #e1e1e1;
  font: inherit;
  color: #000;
  appearance: none;
}
.combo svg {
  position: absolute;
  top: 8px;
  right: 4px;
  pointer-events: none;
}
.field {
  display: flex;
  align-items: center;
  height: 24px;
}
.field label {
  width: 91px;
}
.spin {
  display: inline-flex;
  width: 60px;
  height: 20px;
  border: 1px solid #a5a5a5;
  border-top-color: #696969;
  border-left-color: #696969;
  background: #fff;
  vertical-align: middle;
}
.spin input {
  flex: 1;
  width: 0;
  padding: 0 2px;
  border: 0;
  background: #fff;
  font: inherit;
  text-align: right;
}
.steps {
  display: flex;
  flex-direction: column;
  width: 16px;
  border: 1px solid #a5a5a5;
  border-width: 0 1px 0 1px;
}
.steps button {
  display: flex;
  flex: 1;
  align-items: center;
  justify-content: center;
  border-bottom: 1px solid #a5a5a5;
  background: #efefef;
}
.steps button:last-child {
  border-bottom: 0;
}
.steps i {
  border: 3px solid transparent;
}
.steps .up {
  border-top: 0;
  border-bottom-color: #000;
}
.steps .down {
  border-bottom: 0;
  border-top-color: #000;
}
.note {
  flex: 1;
  padding: 3px 0 3px 1px;
  border: 1px solid #dce5f4;
  border-right-color: #a9a9ec;
  border-bottom-color: #a9a9ec;
  background: #f0f3fa;
  line-height: 13px;
}
.note p + p {
  margin-top: 2px;
}
footer {
  display: flex;
  gap: 10px;
}
.body footer {
  margin-top: 8px;
  padding: 11px 1px 0;
  border-top: 1px solid #a0a0a0;
  box-shadow: inset 0 1px #fff;
}
.push {
  display: flex;
  align-items: center;
  justify-content: center;
  width: 73px;
  height: 21px;
  border: 1px solid #adadad;
  background: #e1e1e1;
}
.push.help {
  width: 25px;
  margin-right: auto;
}
.push.default {
  border: 2px solid #0078d7;
}
.priority {
  flex: 1;
}
.priority .inner {
  padding: 4px 1px 14px;
}
.priority .choice,
.priority p {
  height: 19px;
  line-height: 19px;
}
.priority .gap {
  margin-top: 12px;
}
.list {
  margin-top: 9px;
}
.list .inner {
  padding: 6px 0 12px;
}
table {
  table-layout: fixed;
  width: 306px;
  border-collapse: collapse;
}
th {
  height: 18px;
  padding: 0;
  font-weight: normal;
  text-align: center;
}
th:first-child {
  width: 88px;
  padding-left: 1px;
  text-align: left;
}
td {
  height: 24px;
  padding: 0;
  text-align: center;
}
td:first-child {
  padding-left: 2px;
}
.arrows {
  position: absolute;
  z-index: 6;
  top: 130px;
  left: calc(50% - 160px);
  overflow: visible;
  pointer-events: none;
  filter: drop-shadow(2px 4px 3px rgba(0, 0, 0, 0.5));
}
.status {
  justify-content: flex-end;
  align-items: stretch;
  gap: 1px;
  height: 22px;
  padding-top: 2px;
  border-top: 1px solid #a5a8ab;
  background: linear-gradient(#e6e8ec, #a9afb9 55%, #b3b8c1 80%, #c3c7ce);
  font: 12px/16px Roboto, sans-serif;
  color: #2a2e3a;
}
.toggle {
  padding: 0 3px 0 1px;
  border: 1px solid #fff;
  border-top-color: #000;
  border-left-color: #000;
  border-bottom: 0;
}
.toggle.raised {
  padding-right: 0;
  border-color: #e8eaee;
  border-right-color: #777;
}
.pane {
  border-right: 1px solid #9c9c9c;
}
.wide {
  width: 190px;
  border-left: 1px solid #9c9c9c;
}
.mid {
  width: 87px;
}
.small {
  width: 73px;
}
.end {
  width: 35px;
  border: 0;
}
</style>
